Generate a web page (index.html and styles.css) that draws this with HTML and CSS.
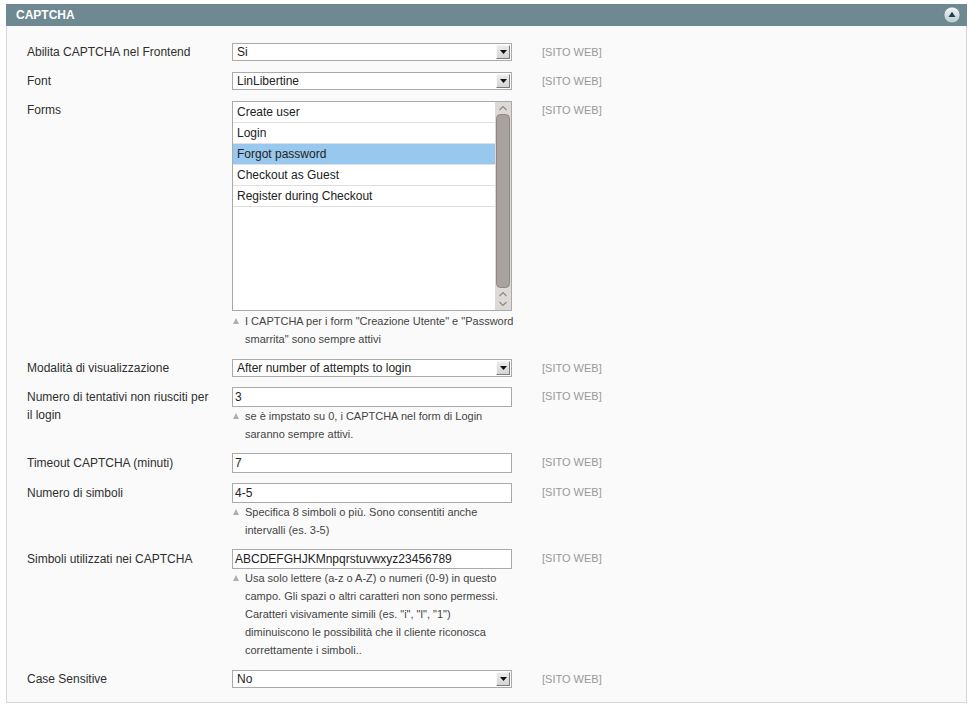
FILE: index.html
```html
<!DOCTYPE html>
<html lang="it">
<head>
<meta charset="utf-8">
<title>CAPTCHA</title>
<link rel="stylesheet" href="styles.css">
</head>
<body>
<div class="section">
  <div class="head">
    <span class="head-title">CAPTCHA</span>
    <span class="collapse">
      <svg width="18" height="18" viewBox="0 0 18 18">
        <defs>
          <linearGradient id="cg" x1="0" y1="0" x2="0" y2="1">
            <stop offset="0" stop-color="#f4f7f8"/>
            <stop offset="1" stop-color="#b9c9ce"/>
          </linearGradient>
        </defs>
        <circle cx="9" cy="9" r="8" fill="url(#cg)" stroke="#5d747c" stroke-width="0.6"/>
        <path d="M5.5 11 L9 5.8 L12.5 11 Z" fill="#1f3f4b"/>
      </svg>
    </span>
  </div>
  <div class="body">
    <div class="row">
      <div class="label">Abilita CAPTCHA nel Frontend</div>
      <div class="value">
        <div class="select"><span>Si</span><span class="sel-btn"><svg width="7" height="4" viewBox="0 0 7 4"><path d="M0 0 H7 L3.5 4 Z" fill="#111"/></svg></span></div>
      </div>
      <div class="scope">[SITO WEB]</div>
    </div>
    <div class="row">
      <div class="label">Font</div>
      <div class="value">
        <div class="select"><span>LinLibertine</span><span class="sel-btn"><svg width="7" height="4" viewBox="0 0 7 4"><path d="M0 0 H7 L3.5 4 Z" fill="#111"/></svg></span></div>
      </div>
      <div class="scope">[SITO WEB]</div>
    </div>
    <div class="row">
      <div class="label">Forms</div>
      <div class="value">
        <div class="multi">
          <div class="options">
            <div class="opt">Create user</div>
            <div class="opt">Login</div>
            <div class="opt sel">Forgot password</div>
            <div class="opt">Checkout as Guest</div>
            <div class="opt">Register during Checkout</div>
          </div>
          <div class="scrollbar">
            <svg width="16" height="208" viewBox="0 0 16 208">
              <rect x="0" y="0" width="16" height="208" fill="#dcd9d6"/>
              <path d="M4.5 8 L8 4.5 L11.5 8" fill="none" stroke="#8d8784" stroke-width="1.2"/>
              <rect x="1.5" y="12.5" width="13" height="173" rx="4" fill="#aaa29f" stroke="#8e8784"/>
              <path d="M4.5 194 L8 190.5 L11.5 194" fill="none" stroke="#8d8784" stroke-width="1.2"/>
              <path d="M4.5 200 L8 203.5 L11.5 200" fill="none" stroke="#8d8784" stroke-width="1.2"/>
            </svg>
          </div>
        </div>
        <div class="note note-multi"><span class="note-icon"></span><span class="note-text">I CAPTCHA per i form "Creazione Utente" e "Password smarrita" sono sempre attivi</span></div>
      </div>
      <div class="scope">[SITO WEB]</div>
    </div>
    <div class="row row-short">
      <div class="label">Modalità di visualizzazione</div>
      <div class="value">
        <div class="select"><span>After number of attempts to login</span><span class="sel-btn"><svg width="7" height="4" viewBox="0 0 7 4"><path d="M0 0 H7 L3.5 4 Z" fill="#111"/></svg></span></div>
      </div>
      <div class="scope">[SITO WEB]</div>
    </div>
    <div class="row row-input">
      <div class="label">Numero di tentativi non riusciti per il login</div>
      <div class="value">
        <div class="input">3</div>
        <div class="note"><span class="note-icon"></span><span class="note-text">se è impstato su 0, i CAPTCHA nel form di Login saranno sempre attivi.</span></div>
      </div>
      <div class="scope">[SITO WEB]</div>
    </div>
    <div class="row row-input">
      <div class="label">Timeout CAPTCHA (minuti)</div>
      <div class="value">
        <div class="input">7</div>
      </div>
      <div class="scope">[SITO WEB]</div>
    </div>
    <div class="row row-input">
      <div class="label">Numero di simboli</div>
      <div class="value">
        <div class="input">4-5</div>
        <div class="note"><span class="note-icon"></span><span class="note-text">Specifica 8 simboli o più. Sono consentiti anche intervalli (es. 3-5)</span></div>
      </div>
      <div class="scope">[SITO WEB]</div>
    </div>
    <div class="row row-input row-long">
      <div class="label">Simboli utilizzati nei CAPTCHA</div>
      <div class="value">
        <div class="input">ABCDEFGHJKMnpqrstuvwxyz23456789</div>
        <div class="note"><span class="note-icon"></span><span class="note-text">Usa solo lettere (a-z o A-Z) o numeri (0-9) in questo campo. Gli spazi o altri caratteri non sono permessi. Caratteri visivamente simili (es. "i", "l", "1") diminuiscono le possibilità che il cliente riconosca correttamente i simboli..</span></div>
      </div>
      <div class="scope">[SITO WEB]</div>
    </div>
    <div class="row">
      <div class="label">Case Sensitive</div>
      <div class="value">
        <div class="select"><span>No</span><span class="sel-btn"><svg width="7" height="4" viewBox="0 0 7 4"><path d="M0 0 H7 L3.5 4 Z" fill="#111"/></svg></span></div>
      </div>
      <div class="scope">[SITO WEB]</div>
    </div>
  </div>
</div>
</body>
</html>
```

FILE: styles.css
```css
html, body {
  margin: 0;
  padding: 0;
  background: #ffffff;
}
body {
  font-family: "Liberation Sans", Arial, sans-serif;
  font-size: 12px;
  color: #2f2f2f;
}
.section {
  margin: 4px 0 0 6px;
  width: 961px;
}
.head {
  height: 22px;
  background: #6f8992;
  display: flex;
  align-items: center;
  justify-content: space-between;
  padding: 0 6px 0 10px;
}
.head-title {
  color: #ffffff;
  font-weight: bold;
  font-size: 12px;
  line-height: 22px;
}
.collapse {
  display: flex;
  align-items: center;
}
.body {
  background: #fafafa;
  border: 1px solid #d6d6d6;
  border-top: 0;
  padding: 17px 0 4px 20px;
}
.row {
  display: flex;
  align-items: flex-start;
  margin-bottom: 11px;
}
.row-input,
.row-short {
  margin-bottom: 10px;
}
.row-long {
  margin-bottom: 11px;
}
.row:last-child {
  margin-bottom: 10px;
}
.label {
  width: 190px;
  padding-right: 15px;
  line-height: 18px;
  color: #2f2f2f;
}
.row-input .label {
  line-height: 18px;
  padding-top: 1px;
}
.value {
  width: 280px;
  margin-right: 30px;
}
.scope {
  font-size: 11px;
  color: #999999;
  line-height: 18px;
}
.select {
  height: 18px;
  box-sizing: border-box;
  border: 1px solid #aaaaaa;
  background: #ffffff;
  display: flex;
  align-items: center;
  justify-content: space-between;
  padding: 0 1px 0 4px;
  color: #222222;
  line-height: 16px;
}
.sel-btn {
  width: 14px;
  height: 14px;
  box-sizing: border-box;
  background: linear-gradient(#ececec, #d4d4d4);
  border-top: 1px solid #f8f8f8;
  border-left: 1px solid #f8f8f8;
  border-right: 1px solid #7a7a7a;
  border-bottom: 1px solid #7a7a7a;
  display: flex;
  align-items: center;
  justify-content: center;
}
.input {
  height: 20px;
  box-sizing: border-box;
  border: 1px solid #aaaaaa;
  background: #ffffff;
  padding: 0 2px;
  line-height: 18px;
  color: #222222;
}
.multi {
  height: 210px;
  box-sizing: border-box;
  border: 1px solid #aaaaaa;
  background: #ffffff;
  display: flex;
}
.options {
  flex: 1;
}
.opt {
  height: 21px;
  box-sizing: border-box;
  border-bottom: 1px solid #e0e0e0;
  padding-left: 4px;
  line-height: 20px;
  color: #222222;
}
.opt.sel {
  background: #99c8ee;
}
.scrollbar {
  width: 16px;
  display: flex;
}
.note {
  display: flex;
  margin-right: -3px;
  font-size: 11px;
  line-height: 18px;
  color: #444444;
}
.note-multi {
  margin-top: 1px;
}
.note-icon {
  flex: none;
  width: 0;
  height: 0;
  margin: 6px 6px 0 1px;
  border-left: 3.5px solid transparent;
  border-right: 3.5px solid transparent;
  border-bottom: 6px solid #a7b1b5;
}
.note-text {
  flex: 1;
}
```
